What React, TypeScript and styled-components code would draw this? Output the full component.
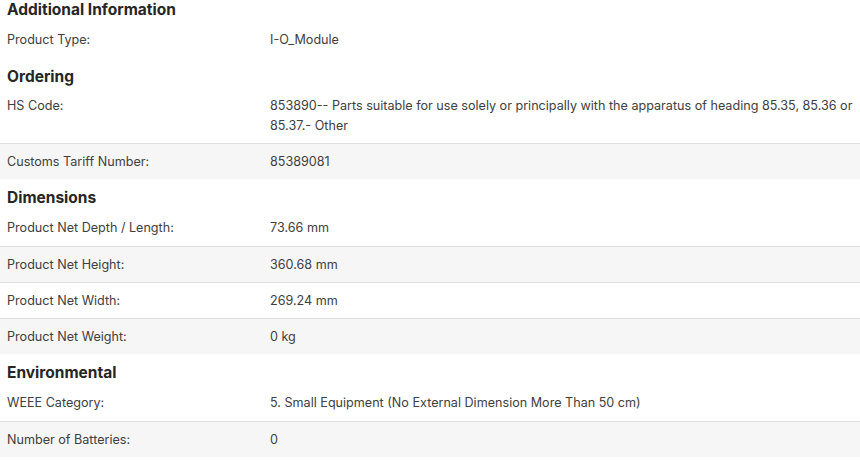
import React from "react";
import styled, { createGlobalStyle } from "styled-components";

const Global = createGlobalStyle`
  html, body { margin: 0; padding: 0; background: #ffffff; }
  body { font-family: Inter, Lato, "Liberation Sans", sans-serif; color: #404040; }
`;

const Page = styled.div`
  width: 860px;
  display: flex;
  flex-direction: column;
`;

const Section = styled.section`
  display: flex;
  flex-direction: column;
  & + & { margin-top: 9px; }
`;

const Heading = styled.h3`
  margin: 0 0 2px 0;
  padding: 0 7px;
  font-size: 15.5px;
  line-height: 20px;
  font-weight: 700;
  color: #262626;
`;

const Row = styled.div<{ $shaded?: boolean }>`
  box-sizing: border-box;
  display: grid;
  grid-template-columns: 263px 1fr;
  align-content: center;
  align-items: start;
  min-height: 36px;
  padding: 7px 7px;
  font-size: 12.6px;
  line-height: 20px;
  background: ${(p) => (p.$shaded ? "#f6f6f6" : "#ffffff")};
  & + & { border-top: 1px solid #dedede; }
`;

const Label = styled.div`
  color: #404040;
`;

const Value = styled.div`
  min-width: 0;
  color: #404040;
`;

const data: { title: string; rows: [string, string][] }[] = [
  { title: "Additional Information", rows: [["Product Type:", "I-O_Module"]] },
  {
    title: "Ordering",
    rows: [
      [
        "HS Code:",
        "853890-- Parts suitable for use solely or principally with the apparatus of heading 85.35, 85.36 or 85.37.- Other",
      ],
      ["Customs Tariff Number:", "85389081"],
    ],
  },
  {
    title: "Dimensions",
    rows: [
      ["Product Net Depth / Length:", "73.66 mm"],
      ["Product Net Height:", "360.68 mm"],
      ["Product Net Width:", "269.24 mm"],
      ["Product Net Weight:", "0 kg"],
    ],
  },
  {
    title: "Environmental",
    rows: [
      ["WEEE Category:", "5. Small Equipment (No External Dimension More Than 50 cm)"],
      ["Number of Batteries:", "0"],
    ],
  },
];

export default function App() {
  return (
    <Page>
      <Global />
      {data.map((s) => (
        <Section key={s.title}>
          <Heading>{s.title}</Heading>
          {s.rows.map(([l, v], i) => (
            <Row key={l} $shaded={i % 2 === 1}>
              <Label>{l}</Label>
              <Value>{v}</Value>
            </Row>
          ))}
        </Section>
      ))}
    </Page>
  );
}
